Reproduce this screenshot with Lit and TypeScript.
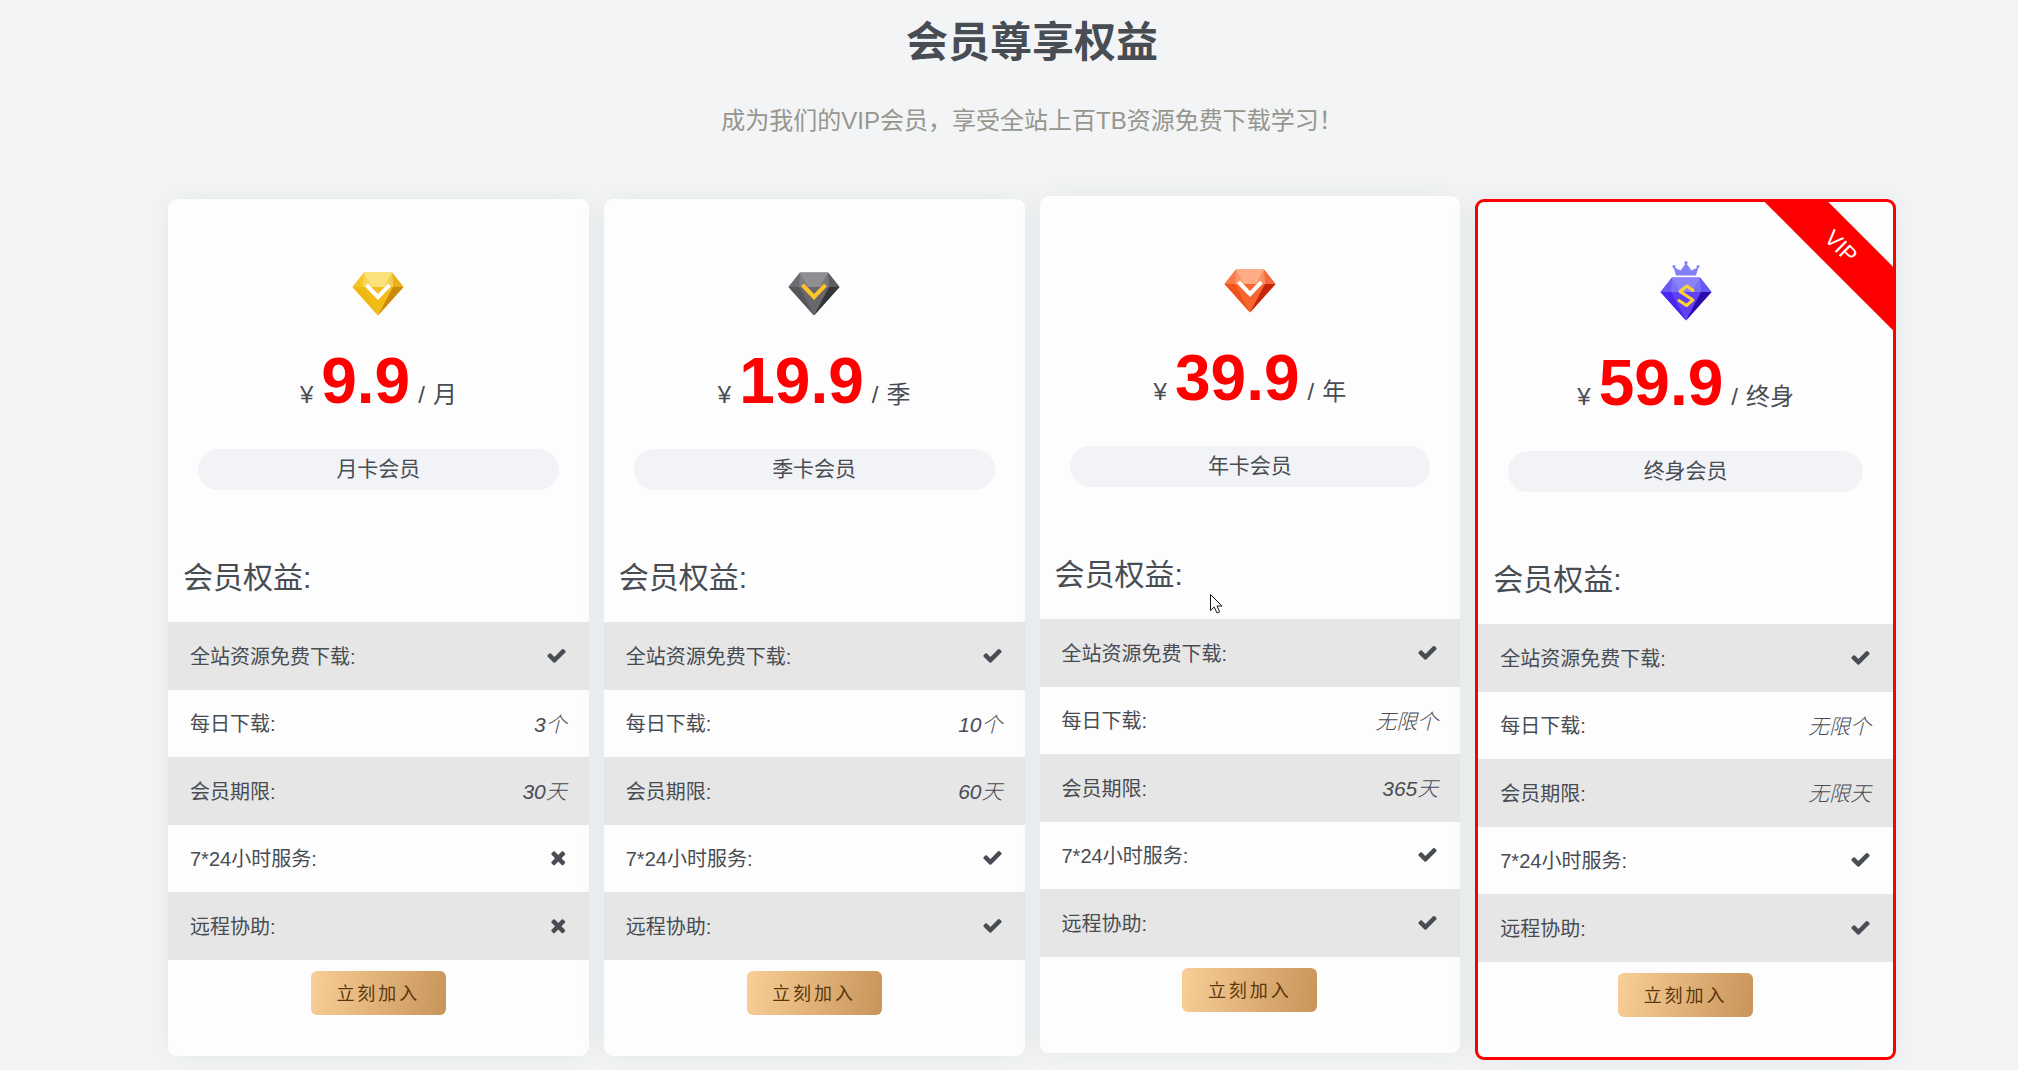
import { LitElement, html, css, svg, nothing } from "lit";
import { customElement, property } from "lit/decorators.js";
import { classMap } from "lit/directives/class-map.js";

interface Benefit {
  label: string;
  value: string | boolean;
}

interface Gem {
  top: string;
  topLeft: string;
  topRight: string;
  left: string;
  center: string;
  right: string;
  mark: string;
  crown?: string;
}

interface Plan {
  price: string;
  unit: string;
  name: string;
  gem: Gem;
  benefits: Benefit[];
  raised?: boolean;
  featured?: boolean;
}

const benefits = (daily: string, term: string, service: boolean, remote: boolean): Benefit[] => [
  { label: "全站资源免费下载:", value: true },
  { label: "每日下载:", value: daily },
  { label: "会员期限:", value: term },
  { label: "7*24小时服务:", value: service },
  { label: "远程协助:", value: remote },
];

const PLANS: Plan[] = [
  {
    price: "9.9",
    unit: "月",
    name: "月卡会员",
    gem: {
      top: "#fce27a", topLeft: "#f3c62c", topRight: "#e9b01c",
      left: "#f0b90f", center: "#f2bd1b", right: "#c98a0c", mark: "#ffffff",
    },
    benefits: benefits("3个", "30天", false, false),
  },
  {
    price: "19.9",
    unit: "季",
    name: "季卡会员",
    gem: {
      top: "#8f8f92", topLeft: "#6c6c70", topRight: "#5c5c60",
      left: "#55555a", center: "#68686c", right: "#35353a", mark: "#fcc42a",
    },
    benefits: benefits("10个", "60天", true, true),
  },
  {
    price: "39.9",
    unit: "年",
    name: "年卡会员",
    raised: true,
    gem: {
      top: "#ffab84", topLeft: "#fb7a4c", topRight: "#f2683e",
      left: "#f0521c", center: "#f8652e", right: "#c42408", mark: "#ffffff",
    },
    benefits: benefits("无限个", "365天", true, true),
  },
  {
    price: "59.9",
    unit: "终身",
    name: "终身会员",
    featured: true,
    gem: {
      top: "#8c83fb", topLeft: "#6a5cf2", topRight: "#6459f5",
      left: "#4a26f0", center: "#6141f6", right: "#2c0ca8", mark: "#fdd42f", crown: "#8280f4",
    },
    benefits: benefits("无限个", "无限天", true, true),
  },
];

@customElement("plan-gem")
class PlanGem extends LitElement {
  @property({ attribute: false }) gem!: Gem;

  static styles = css`
    :host {
      display: block;
      width: 60px;
      height: 60px;
    }
    .gem {
      display: block;
      width: 100%;
      height: 100%;
    }
  `;

  render() {
    const g = this.gem;
    const drop = g.crown ? 3 : 0;
    return html`<svg class="gem" viewBox="0 0 60 60" aria-hidden="true">
      ${g.crown
        ? svg`<g fill=${g.crown}>
            <path d="M20 14.500 L17.500 6 L24.500 9.500 L30 2 L35.500 9.500 L42.500 6 L40 14.500 Z"/>
            <circle cx="18" cy="5.500" r="1.500"/>
            <circle cx="30" cy="1.700" r="1.600"/>
            <circle cx="42" cy="5.500" r="1.500"/>
          </g>`
        : nothing}
      <g transform="translate(0 ${drop})">
        <path d="M16 13.500 H44 L55.500 28 L30 56.500 L4.500 28 Z" fill=${g.center} />
        <path d="M16 13.500 L4.500 28 H15 Z" fill=${g.topLeft} />
        <path d="M44 13.500 L55.500 28 H45 Z" fill=${g.topRight} />
        <path d="M16 13.500 H44 L45 28 H15 Z" fill=${g.top} />
        <path d="M4.500 28 H15 L30 56.500 Z" fill=${g.left} />
        <path d="M55.500 28 H45 L30 56.500 Z" fill=${g.right} />
        <path d="M15 28 L16 13.500 L24 28 Z" fill=${g.topLeft} opacity="0.450" />
        <path d="M45 28 L44 13.500 L36 28 Z" fill=${g.topRight} opacity="0.450" />
        ${g.crown
          ? svg`<path d="M37 26.500 L31 22 L24 27.500 L37 36 L30.500 41.500 L23 36.500" fill="none"
              stroke=${g.mark} stroke-width="3" stroke-linejoin="round" stroke-linecap="round"/>`
          : svg`<path d="M18.500 26 L30 38 L41.500 26" fill="none"
              stroke=${g.mark} stroke-width="4"/>`}
      </g>
    </svg>`;
  }
}

@customElement("plan-card")
class PlanCard extends LitElement {
  @property({ attribute: false }) plan!: Plan;

  static styles = css`
    :host {
      display: block;
      min-width: 0;
    }
    .card {
      position: relative;
      display: flex;
      flex-direction: column;
      align-items: center;
      padding: 60px 0 41px;
      border-radius: 9px;
      background: #fdfdfe;
      box-shadow: 0 0 30px rgba(40, 44, 60, 0.06);
    }
    .raised {
      transform: translateY(-3px);
    }
    .featured {
      border: 3px solid #ff0000;
      overflow: hidden;
      padding: 59px 0 40px;
    }
    .ribbon {
      position: absolute;
      top: 22px;
      right: -48px;
      width: 200px;
      line-height: 45px;
      background: #ff0000;
      color: #ffffff;
      font-size: 22px;
      text-align: center;
      transform: rotate(45deg);
    }
    .price {
      display: flex;
      align-items: baseline;
      gap: 8px;
      margin: 30px 0 0;
      font-size: 24px;
      line-height: 24px;
    }
    .amount {
      color: #ff0000;
      font-size: 64px;
      font-weight: 700;
      line-height: 64px;
    }
    .name {
      align-self: stretch;
      margin: 36px 30px 0;
      padding-bottom: 2px;
      border-radius: 21px;
      background: #f1f3f6;
      font-size: 21px;
      line-height: 39px;
      text-align: center;
    }
    .heading {
      align-self: stretch;
      margin: 68px 15px 24px;
      font-size: 30px;
      font-weight: inherit;
      line-height: 40px;
    }
    .benefits {
      align-self: stretch;
      margin: 0;
      padding: 0;
      list-style: none;
    }
    .benefit {
      box-sizing: border-box;
      display: flex;
      align-items: center;
      justify-content: space-between;
      height: 67px;
      padding: 0 22px 2px;
      font-size: 20px;
    }
    .benefit:nth-child(odd) {
      height: 68px;
      background: #e6e6e7;
    }
    .value {
      font-size: 21px;
      font-style: italic;
      font-weight: 300;
    }
    .mark {
      display: block;
      height: 21px;
      fill: currentColor;
    }
    .join {
      margin-top: 11px;
      width: 135px;
      height: 44px;
      padding: 0 0 2px;
      border: 0;
      border-radius: 6px;
      background: linear-gradient(100deg, #f8cf97, #c8945a);
      color: #5a360c;
      font: inherit;
      font-size: 18px;
      letter-spacing: 3px;
      cursor: pointer;
    }
    .pointer {
      position: absolute;
      left: 170px;
      top: 398px;
      width: 13px;
      height: 20px;
    }
  `;

  private renderValue(value: string | boolean) {
    if (typeof value === "string") {
      return html`<em class="value">${value}</em>`;
    }
    return value
      ? html`<svg class="mark" viewBox="0 0 1792 1792" role="img" aria-label="✓">
          <path
            d="M1671 566q0 40-28 68l-724 724-136 136q-28 28-68 28t-68-28l-136-136-362-362q-28-28-28-68t28-68l136-136q28-28 68-28t68 28l294 295 656-657q28-28 68-28t68 28l136 136q28 28 28 68z"
          />
        </svg>`
      : html`<svg class="mark" viewBox="192 0 1408 1792" role="img" aria-label="✕">
          <path
            d="M1490 1322q0 40-28 68l-136 136q-28 28-68 28t-68-28l-294-294-294 294q-28 28-68 28t-68-28l-136-136q-28-28-28-68t28-68l294-294-294-294q-28-28-28-68t28-68l136-136q28-28 68-28t68 28l294 294 294-294q28-28 68-28t68 28l136 136q28 28 28 68t-28 68l-294 294 294 294q28 28 28 68z"
          />
        </svg>`;
  }

  render() {
    const p = this.plan;
    return html`<article
      class=${classMap({ card: true, raised: !!p.raised, featured: !!p.featured })}
    >
      ${p.featured ? html`<span class="ribbon">VIP</span>` : nothing}
      <plan-gem .gem=${p.gem}></plan-gem>
      <p class="price">
        <span>¥</span><strong class="amount">${p.price}</strong><span>/</span><span>${p.unit}</span>
      </p>
      <p class="name">${p.name}</p>
      <h2 class="heading">会员权益:</h2>
      <ul class="benefits">
        ${p.benefits.map(
          (b) => html`<li class="benefit"><span>${b.label}</span>${this.renderValue(b.value)}</li>`
        )}
      </ul>
      <button class="join" type="button">立刻加入</button>
      ${p.raised
        ? html`<svg class="pointer" viewBox="0 0 13 20" aria-hidden="true">
            <path
              d="M0.500 0.500 V16.500 L4.200 13 L7 19 L9.600 17.900 L7 12 H12 Z"
              fill="#ffffff"
              stroke="#15151f"
            />
          </svg>`
        : nothing}
    </article>`;
  }
}

@customElement("app-root")
class AppRoot extends LitElement {
  static styles = css`
    :host {
      display: block;
      box-sizing: border-box;
      min-height: 100vh;
      padding: 12px 122px 8px 168px;
      background: #f2f4f5;
      color: #484c53;
      font-family: "Liberation Sans", "Noto Sans CJK SC", sans-serif;
      font-weight: 400;
    }
    .title {
      margin: 0;
      font-size: 42px;
      font-weight: 700;
      line-height: 62px;
      text-align: center;
    }
    .subtitle {
      margin: 29px 0 60px;
      color: #96968f;
      font-size: 24px;
      line-height: 36px;
      text-align: center;
    }
    .plans {
      display: grid;
      grid-template-columns: repeat(4, minmax(0, 1fr));
      align-items: start;
      gap: 15px;
    }
  `;

  render() {
    return html`
      <main lang="zh-CN">
        <h1 class="title">会员尊享权益</h1>
        <p class="subtitle">成为我们的VIP会员，享受全站上百TB资源免费下载学习！</p>
        <section class="plans">
          ${PLANS.map((plan) => html`<plan-card .plan=${plan}></plan-card>`)}
        </section>
      </main>
    `;
  }
}
